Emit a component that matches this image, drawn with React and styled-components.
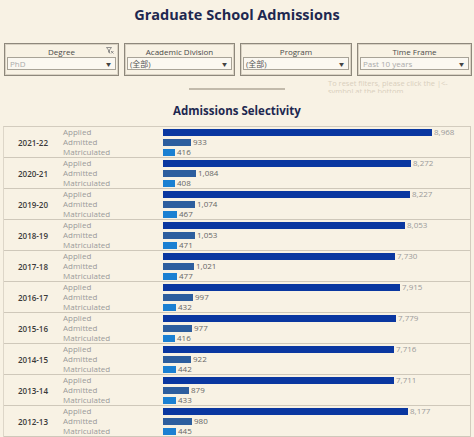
import React from "react";
import styled, { createGlobalStyle } from "styled-components";

const GlobalStyle = createGlobalStyle`
  html, body {
    margin: 0;
    padding: 0;
    background: #f8f2e4;
  }
  body {
    font-family: "Open Sans", "Noto Sans", "Noto Sans CJK SC", sans-serif;
    overflow: hidden;
  }
`;

const rows = [
  { year: "2021-22", applied: 8968, admitted: 933, matriculated: 416 },
  { year: "2020-21", applied: 8272, admitted: 1084, matriculated: 408 },
  { year: "2019-20", applied: 8227, admitted: 1074, matriculated: 467 },
  { year: "2018-19", applied: 8053, admitted: 1053, matriculated: 471 },
  { year: "2017-18", applied: 7730, admitted: 1021, matriculated: 477 },
  { year: "2016-17", applied: 7915, admitted: 997, matriculated: 432 },
  { year: "2015-16", applied: 7779, admitted: 977, matriculated: 416 },
  { year: "2014-15", applied: 7716, admitted: 922, matriculated: 442 },
  { year: "2013-14", applied: 7711, admitted: 879, matriculated: 433 },
  { year: "2012-13", applied: 8177, admitted: 980, matriculated: 445 },
];

const filters = [
  { label: "Degree", value: "PhD", muted: true, icon: true },
  { label: "Academic Division", value: "(全部)" },
  { label: "Program", value: "(全部)" },
  { label: "Time Frame", value: "Past 10 years", muted: true },
];

const barColors = {
  applied: "#0a37a0",
  admitted: "#2d5e9e",
  matriculated: "#1b80d2",
};

const SCALE = 269 / 8968;

const Page = styled.div`
  width: 474px;
  height: 437px;
  display: flex;
  flex-direction: column;
`;

const Title = styled.h1`
  margin: 2px 0 0;
  height: 26px;
  line-height: 26px;
  text-align: center;
  font-size: 14.5px;
  font-weight: 700;
  color: #1e2850;
`;

const FilterRow = styled.div`
  margin-top: 15px;
  display: grid;
  grid-template-columns: 115px 111px 112px 115px;
  column-gap: 5px;
  padding-left: 4px;
`;

const FilterBox = styled.div`
  height: 33px;
  box-sizing: border-box;
  border: 1px solid #8e887c;
  box-shadow: inset 0 0 0 1px #d9d2c3;
  padding: 2px 2px 0;
  display: flex;
  flex-direction: column;
`;

const FilterHead = styled.div`
  height: 11px;
  line-height: 11px;
  font-size: 8px;
  color: #4a4a4a;
  text-align: center;
  position: relative;
`;

const FilterIcon = styled.svg`
  position: absolute;
  right: 2px;
  top: 1px;
`;

const Select = styled.div`
  height: 13px;
  box-sizing: border-box;
  border: 1px solid #a8a397;
  background: #fbf8f1;
  display: flex;
  align-items: center;
  justify-content: space-between;
  padding: 0 4px 0 2px;
  font-size: 8px;
  color: ${(p) => (p.$muted ? "#ababab" : "#555")};
`;

const Caret = styled.span`
  font-size: 5px;
  color: #444;
`;

const UnderRow = styled.div`
  height: 19px;
  display: grid;
  grid-template-columns: 1fr 96px 1fr;
  overflow: hidden;
`;

const Rule = styled.div`
  height: 2px;
  background: #c2baab;
  margin-top: 12px;
`;

const ResetNote = styled.div`
  margin: 3px 0 0 43px;
  font-size: 7.5px;
  line-height: 8px;
  color: #d8cfbd;
  width: 140px;
`;

const SubTitle = styled.h2`
  margin: 7px 0 0;
  height: 21px;
  line-height: 21px;
  text-align: center;
  font-size: 11.5px;
  font-weight: 700;
  color: #1e2850;
`;

const Chart = styled.div`
  margin: 5px 3px 0 3px;
  border-top: 1px solid #d3ccbe;
  border-left: 1px solid #ddd6c8;
  border-right: 1px solid #d3ccbe;
`;

const YearRow = styled.div`
  display: grid;
  grid-template-columns: 58px 100px 1fr;
  border-bottom: 1px solid #cfc8ba;
  height: 30px;
`;

const Year = styled.div`
  display: flex;
  align-items: center;
  justify-content: center;
  font-size: 8px;
  font-weight: 600;
  color: #3a3a3a;
`;

const Labels = styled.div`
  display: flex;
  flex-direction: column;
  padding-left: 1px;
`;

const Label = styled.div`
  height: 10px;
  line-height: 10px;
  font-size: 8px;
  color: #9a9a9a;
`;

const Bars = styled.div`
  display: flex;
  flex-direction: column;
  padding-left: 1px;
`;

const BarLine = styled.div`
  height: 10px;
  display: flex;
  align-items: center;
  gap: 2px;
`;

const Bar = styled.div`
  height: 7px;
  background: ${(p) => p.$color};
`;

const Value = styled.span`
  font-size: 8px;
  line-height: 10px;
  color: ${(p) => (p.$light ? "#9a9a9a" : "#666")};
`;

const fmt = (n) => n.toLocaleString("en-US");

export default function App() {
  return (
    <Page>
      <GlobalStyle />
      <Title>Graduate School Admissions</Title>
      <FilterRow>
        {filters.map((f) => (
          <FilterBox key={f.label}>
            <FilterHead>
              {f.label}
              {f.icon && (
                <FilterIcon width="8" height="7" viewBox="0 0 8 7">
                  <path d="M0.5 0.5h5l-2 2.5v3l-1-0.8v-2.2z" fill="none" stroke="#777" strokeWidth="0.8" />
                  <path d="M5 4l2.5 2.5M7.5 4L5 6.5" stroke="#777" strokeWidth="0.8" />
                </FilterIcon>
              )}
            </FilterHead>
            <Select $muted={f.muted}>
              <span>{f.value}</span>
              <Caret>▼</Caret>
            </Select>
          </FilterBox>
        ))}
      </FilterRow>
      <UnderRow>
        <div />
        <Rule />
        <ResetNote>
          To reset filters, please click the |&lt;- symbol at the bottom
        </ResetNote>
      </UnderRow>
      <SubTitle>Admissions Selectivity</SubTitle>
      <Chart>
        {rows.map((r) => (
          <YearRow key={r.year}>
            <Year>{r.year}</Year>
            <Labels>
              <Label>Applied</Label>
              <Label>Admitted</Label>
              <Label>Matriculated</Label>
            </Labels>
            <Bars>
              {["applied", "admitted", "matriculated"].map((k) => (
                <BarLine key={k}>
                  <Bar
                    $color={barColors[k]}
                    style={{ width: Math.round(r[k] * SCALE) }}
                  />
                  <Value $light={k === "applied"}>{fmt(r[k])}</Value>
                </BarLine>
              ))}
            </Bars>
          </YearRow>
        ))}
      </Chart>
    </Page>
  );
}
